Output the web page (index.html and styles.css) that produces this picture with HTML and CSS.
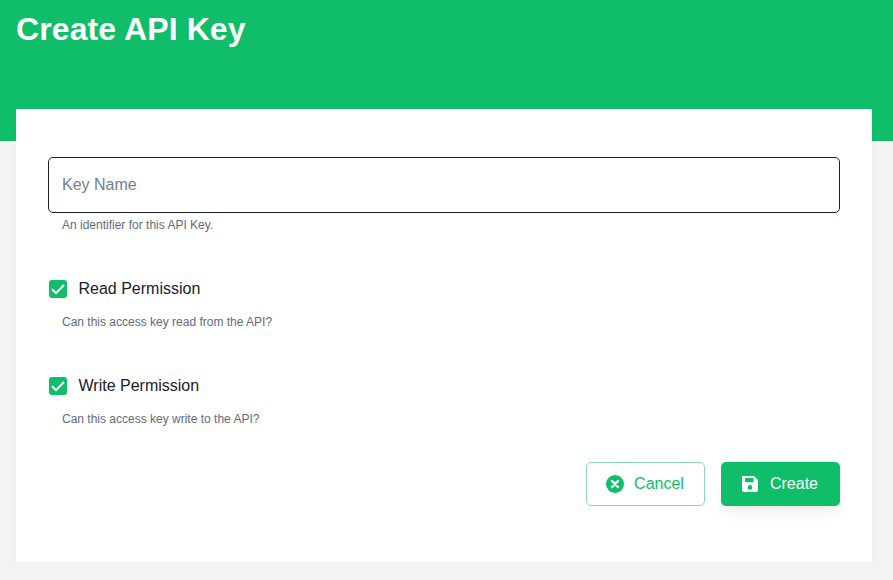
FILE: index.html
```html
<!DOCTYPE html>
<html lang="en">

<head>
    <meta charset="UTF-8">
    <meta name="viewport" content="width=device-width, initial-scale=1.0">
    <title>Create API Key</title>
    <link rel="stylesheet" href="styles.css">
</head>

<body>
    <header class="page-header">
        <h1>Create API Key</h1>
    </header>

    <main class="card">
        <div class="field">
            <input type="text" class="text-input" placeholder="Key Name">
            <p class="hint">An identifier for this API Key.</p>
        </div>

        <div class="check-field">
            <label class="check-row">
                <span class="check-box">
                    <svg viewBox="0 0 18 18" width="18" height="18"><path d="M3 9.3l4 3.9 8-8.2" fill="none" stroke="#fff" stroke-width="2"/></svg>
                </span>
                Read Permission
            </label>
            <p class="hint">Can this access key read from the API?</p>
        </div>

        <div class="check-field">
            <label class="check-row">
                <span class="check-box">
                    <svg viewBox="0 0 18 18" width="18" height="18"><path d="M3 9.3l4 3.9 8-8.2" fill="none" stroke="#fff" stroke-width="2"/></svg>
                </span>
                Write Permission
            </label>
            <p class="hint">Can this access key write to the API?</p>
        </div>

        <div class="actions">
            <button class="btn btn-outline">
                <svg viewBox="0 0 18 18" width="18" height="18"><circle cx="9" cy="9" r="9" fill="#10bd68"/><path d="M5.9 5.9l6.2 6.2M12.1 5.9l-6.2 6.2" stroke="#fff" stroke-width="2.2" stroke-linecap="round"/></svg>
                Cancel
            </button>
            <button class="btn btn-primary">
                <svg viewBox="0 0 18 18" width="18" height="18"><path fill-rule="evenodd" fill="#fff" d="M2 1h11l4 4v10a2 2 0 0 1-2 2H3a2 2 0 0 1-2-2V2a1 1 0 0 1 1-1zm2 2.6v3.2a.5.5 0 0 0 .5.5h7.6a.5.5 0 0 0 .5-.5V3.6a.5.5 0 0 0-.5-.5H4.5a.5.5 0 0 0-.5.5zM9 10a2.4 2.4 0 1 0 0 4.8A2.4 2.4 0 0 0 9 10z"/></svg>
                Create
            </button>
        </div>
    </main>
</body>

</html>
```

FILE: styles.css
```css
* {
    box-sizing: border-box;
}

body {
    margin: 0;
    font-family: "Liberation Sans", Arial, sans-serif;
    background-color: #f3f3f3;
    color: #1a202c;
}

.page-header {
    height: 141px;
    padding: 11px 16px 0;
    background-color: #10bd68;
}

.page-header h1 {
    margin: 0;
    font-size: 32px;
    line-height: 36px;
    font-weight: 700;
    letter-spacing: 0.1px;
    color: #fff;
}

.card {
    height: 453px;
    margin: -32px 21px 0 16px;
    padding: 48px 32px 0;
    background-color: #fff;
    box-shadow: 0 10px 15px -3px rgba(0, 0, 0, 0.03), 0 4px 6px -2px rgba(0, 0, 0, 0.02);
}

.text-input {
    display: block;
    width: 100%;
    height: 56px;
    padding: 0 13px;
    border: 1px solid #1a202c;
    border-radius: 5px;
    background-color: #fff;
    font-family: inherit;
    font-size: 16px;
    outline: none;
}

.text-input::placeholder {
    color: #718096;
    opacity: 1;
}

.hint {
    margin: 4px 0 0 14px;
    font-size: 12px;
    line-height: 16px;
    color: #5f6b7a;
}

.check-field {
    margin-top: 46px;
}

.check-row {
    display: flex;
    align-items: center;
    gap: 11.5px;
    height: 20px;
    margin-left: 1px;
    font-size: 16px;
    line-height: 20px;
}

.check-row + .hint {
    margin-top: 15px;
}

.check-box {
    display: block;
    width: 18px;
    height: 18px;
    border-radius: 3px;
    background-color: #10bd68;
}

.check-box svg {
    display: block;
}

.actions {
    display: flex;
    justify-content: flex-end;
    gap: 16px;
    margin-top: 35px;
}

.btn {
    display: flex;
    align-items: center;
    justify-content: center;
    gap: 10px;
    height: 44px;
    padding: 0 1px 0 0;
    border-radius: 5px;
    font-family: inherit;
    font-size: 16px;
    cursor: pointer;
}

.btn-outline {
    width: 119px;
    border: 1px solid #8ddcb6;
    background-color: #fff;
    color: #10bd68;
}

.btn-primary {
    width: 119px;
    gap: 11px;
    padding-right: 2px;
    border: none;
    background-color: #10bd68;
    color: #fff;
    box-shadow: 0 10px 15px -3px rgba(0, 0, 0, 0.06), 0 4px 6px -2px rgba(0, 0, 0, 0.03);
}
```
